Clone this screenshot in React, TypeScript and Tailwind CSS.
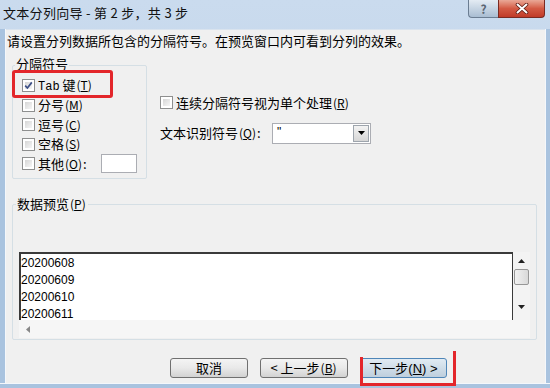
import { ReactNode } from "react";

const font = "font-['Noto_Sans_CJK_SC','Liberation_Sans',sans-serif]";

function Check({ checked }: { checked?: boolean }) {
  return (
    <span className="relative flex h-[13px] w-[13px] shrink-0 border border-[#8e8f8f] bg-white p-[2px]">
      <span className="h-full w-full bg-linear-to-br from-[#d6d6d6] to-[#f6f6f6]" />
      {checked && (
        <svg className="absolute left-0 top-0" width="11" height="11" viewBox="0 0 11 11">
          <path d="M2.2 5.6 L4.4 8 L8.8 2.4" fill="none" stroke="#3c4f86" strokeWidth="1.7" />
        </svg>
      )}
    </span>
  );
}

function Key({ k }: { k: string }) {
  return (
    <span className="px-[1px] text-[12px]">
      (<span className="underline">{k}</span>)
    </span>
  );
}

function Row({ checked, children }: { checked?: boolean; children: ReactNode }) {
  return (
    <div className="flex h-[19.5px] items-center gap-[3px]">
      <Check checked={checked} />
      <span className="whitespace-nowrap">{children}</span>
    </div>
  );
}

function Btn({ children, focus, w }: { children: ReactNode; focus?: boolean; w: string }) {
  return (
    <div
      className={`flex h-[20px] items-center justify-center rounded-[3px] border ${w} ${
        focus
          ? "border-[#4f86b8] bg-linear-to-b from-[#e1ebf3] to-[#bfcfdd]"
          : "border-[#707070] bg-linear-to-b from-[#f4f4f4] via-[#e9e9e9] to-[#d2d2d2]"
      }`}
    >
      {children}
    </div>
  );
}

export default function App() {
  return (
    <div
      className={`relative flex h-[388px] w-[550px] flex-col overflow-hidden bg-linear-to-b from-[#cadbee] to-[#b8cde5] text-[13px] leading-[16px] text-black ${font}`}
    >
      {/* title bar */}
      <div className="flex h-[29px] shrink-0 items-start justify-between">
        <div className="pl-[3px] pt-[4px] text-[13px] leading-[17px] tracking-[0.3px] text-[#111]">
          文本分列向导 - 第 2 步，共 3 步
        </div>
        <div className="mr-[5px] flex">
          <div className="flex h-[18px] w-[30px] items-center justify-center rounded-bl-[4px] border border-r-0 border-t-0 border-[#6b7d92] bg-linear-to-b from-[#e3ebf3] to-[#a9bdd2] text-[12px] font-bold leading-none text-[#5a6472]">
            ?
          </div>
          <div className="flex h-[18px] w-[47px] items-center justify-center rounded-br-[4px] border border-t-0 border-[#7a2a22] bg-linear-to-b from-[#e9a897] via-[#d35a44] to-[#c03a28]">
            <svg width="14" height="11" viewBox="0 0 14 11">
              <path d="M2.5 1.5 L11.5 9.5 M11.5 1.5 L2.5 9.5" stroke="#5a1a12" strokeWidth="3.6" strokeLinecap="round" />
              <path d="M2.5 1.5 L11.5 9.5 M11.5 1.5 L2.5 9.5" stroke="#ffffff" strokeWidth="2" strokeLinecap="round" />
            </svg>
          </div>
        </div>
      </div>

      <div className="flex flex-1">
        <div className="w-[6px] shrink-0 border-r border-[#f4f7fb] bg-[#a9c3df]" />
        <div className="flex flex-1 flex-col border-t border-[#d9e3ee] bg-[#f0f0f0]">
          <div className="pl-[1px] pt-[3px] whitespace-nowrap">
            请设置分列数据所包含的分隔符号。在预览窗口内可看到分列的效果。
          </div>

          <div className="mt-[16px] flex">
            {/* delimiters group */}
            <div className="relative ml-[6px] h-[114px] w-[135px] rounded-[2px] border border-[#d5dfe5] pl-[9px] pt-[10px]">
              <span className="absolute -top-[10px] left-[2px] bg-[#f0f0f0] px-[1px]">分隔符号</span>
              <Row checked>
                <span className="font-['Liberation_Mono','DejaVu_Sans_Mono',monospace] text-[12px]">Tab</span> 键
                <Key k="T" />
              </Row>
              <Row>
                分号<Key k="M" />
              </Row>
              <Row>
                逗号<Key k="C" />
              </Row>
              <Row>
                空格<Key k="S" />
              </Row>
              <div className="flex h-[19.5px] items-center gap-[3px]">
                <Check />
                <span className="whitespace-nowrap">
                  其他<Key k="O" />:
                </span>
                <span className="ml-[11px] h-[19px] w-[36px] border border-[#abadb3] bg-white" />
              </div>
            </div>

            {/* right options */}
            <div className="ml-[13px] flex flex-col pt-[28px]">
              <Row>
                连续分隔符号视为单个处理<Key k="R" />
              </Row>
              <div className="mt-[10px] flex h-[21px] items-center">
                <span className="w-[112px] whitespace-nowrap">
                  文本识别符号<Key k="Q" />:
                </span>
                <div className="flex h-[21px] w-[99px] border border-[#abadb3] bg-white">
                  <span className="flex-1 pl-[4px] pt-[1px] font-['Liberation_Sans',sans-serif] text-[12px] leading-[14px]">
                    "
                  </span>
                  <span className="m-[1px] flex w-[16px] items-center justify-center border border-[#9ea5ad] bg-linear-to-b from-[#f3f3f3] to-[#d6d6d6]">
                    <svg width="7" height="4" viewBox="0 0 7 4">
                      <path d="M0 0 H7 L3.5 4 Z" fill="#000" />
                    </svg>
                  </span>
                </div>
              </div>
            </div>
          </div>

          {/* preview group */}
          <div className="relative ml-[6px] mt-[25px] h-[136px] w-[525px] rounded-[2px] border border-[#d5dfe5] pl-[6px] pt-[47px]">
            <span className="absolute -top-[9px] left-[3px] bg-[#f0f0f0] px-[1px]">
              数据预览<Key k="P" />
            </span>
            <div className="flex h-[86px] w-[511px] flex-col">
              <div className="flex h-[68px]">
                <div className="flex-1 border-l-2 border-r border-t-2 border-[#3a3a3a] bg-white pt-[1px] font-['Liberation_Sans',sans-serif] text-[12px] leading-[17px]">
                  <div>20200608</div>
                  <div>20200609</div>
                  <div>20200610</div>
                  <div>20200611</div>
                </div>
                <div className="flex w-[17px] flex-col items-center bg-[#f3f3f3]">
                  <svg className="mt-[7px]" width="7" height="4" viewBox="0 0 7 4">
                    <path d="M0 4 H7 L3.5 0 Z" fill="#222" />
                  </svg>
                  <div className="mt-[6px] h-[16px] w-[15px] rounded-[2px] border border-[#979797] bg-linear-to-r from-[#f2f2f2] to-[#d9d9d9]" />
                  <svg className="mt-[20px]" width="7" height="4" viewBox="0 0 7 4">
                    <path d="M0 0 H7 L3.5 4 Z" fill="#222" />
                  </svg>
                </div>
              </div>
              <div className="flex h-[18px] items-center bg-[#f6f6f6] pl-[7px]">
                <svg width="4" height="7" viewBox="0 0 4 7">
                  <path d="M4 0 V7 L0 3.5 Z" fill="#888" />
                </svg>
              </div>
            </div>
          </div>

          {/* buttons */}
          <div className="ml-[164px] mt-[18px] flex gap-[12px]">
            <Btn w="w-[78px]">取消</Btn>
            <Btn w="w-[88px]">
              &lt; 上一步<Key k="B" />
            </Btn>
            <Btn w="w-[87px]" focus>
              <span className="font-['Liberation_Sans',sans-serif] text-[13px]">
                <span className={font}>下一步</span>(<span className="underline">N</span>) &gt;
              </span>
            </Btn>
          </div>
        </div>
        <div className="w-[5px] shrink-0 border-l border-[#f4f7fb] bg-[#a9c3df]" />
      </div>
      <div className="h-[5px] shrink-0 border-t border-[#f4f7fb] bg-[#a9c3df]" />

      {/* red annotations */}
      <div className="absolute left-[12px] top-[70px] h-[28px] w-[101px] rounded-[3px] border-[3px] border-[#e3262b]" />
      <div className="absolute left-[360px] top-[357px] h-[29px] w-[96px] border-[3px] border-t-0 border-[#e3262b]" />
      <div className="absolute left-[453px] top-[351px] h-[8px] w-[3px] bg-[#e3262b]" />
    </div>
  );
}
